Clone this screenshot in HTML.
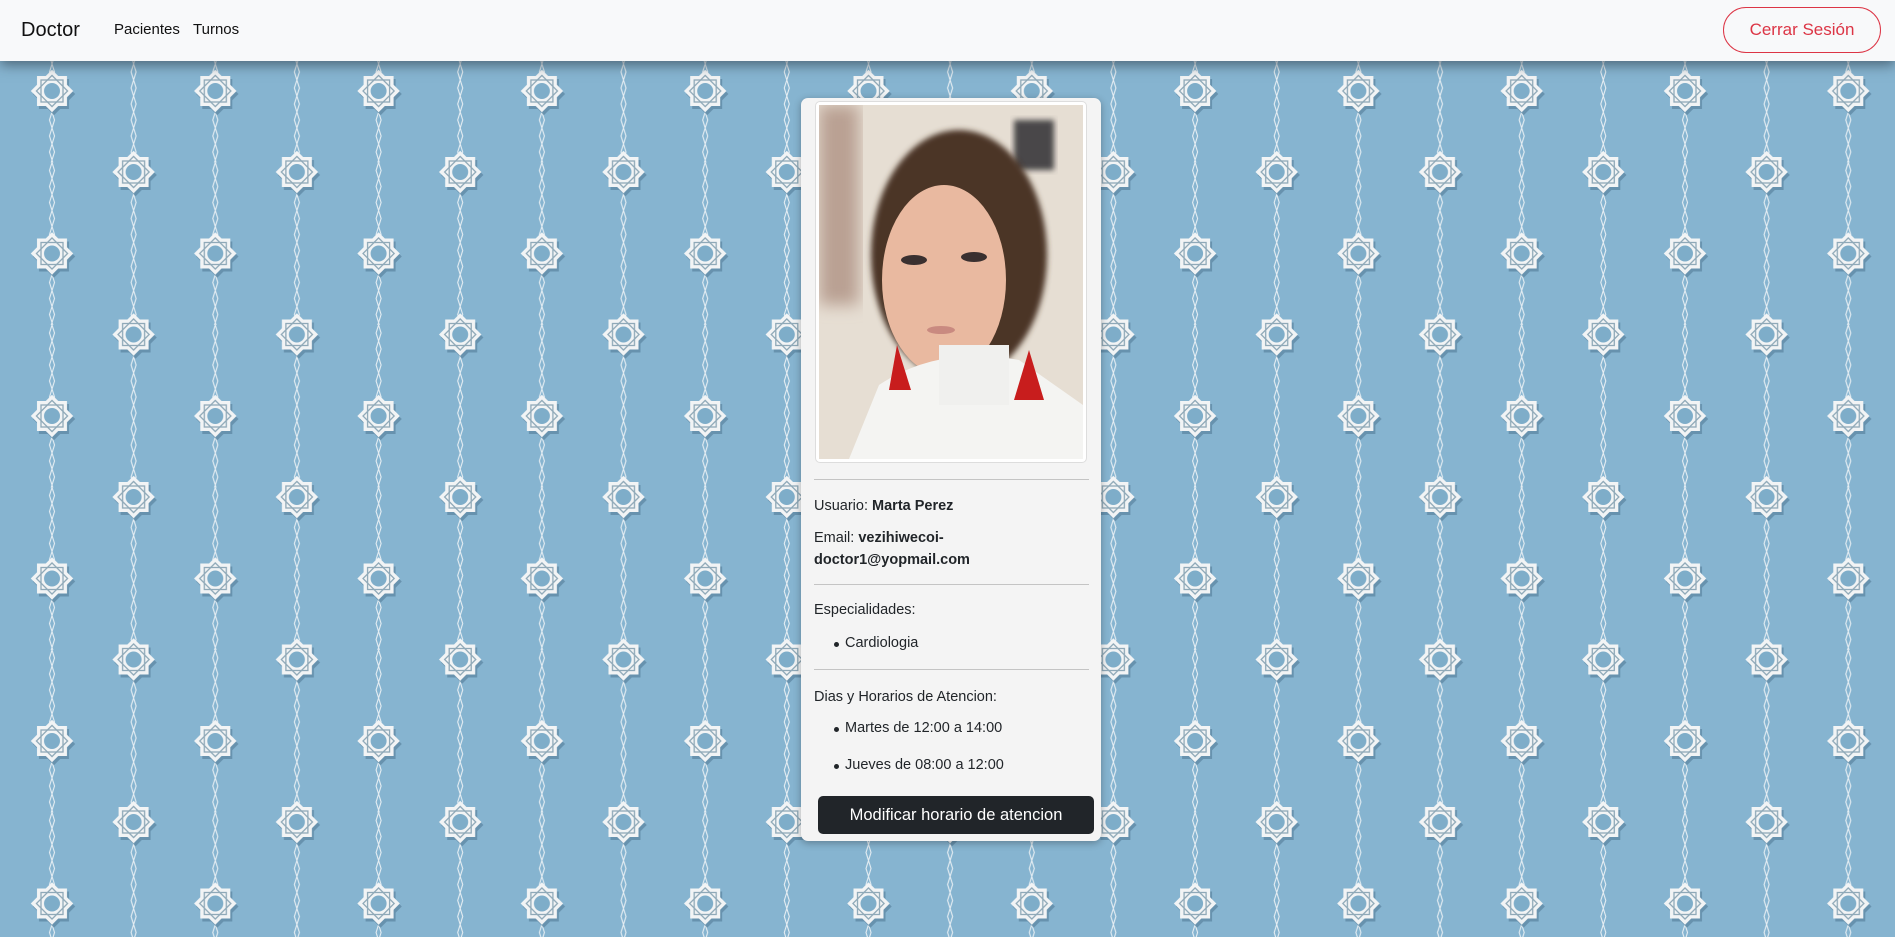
<!DOCTYPE html>
<html><head><meta charset="utf-8"><style>
*{box-sizing:border-box;margin:0;padding:0}
body{width:1895px;height:937px;overflow:hidden;font-family:"Liberation Sans",sans-serif;background:#86b4d0;position:relative}
#bg{position:absolute;left:0;top:0}
nav{position:absolute;left:0;top:0;width:1895px;height:61px;background:#f8f9fa;box-shadow:0 4px 12px rgba(30,40,50,.55);z-index:5}
.brand{position:absolute;left:21px;top:19px;font-size:20px;color:#111}
.nl{position:absolute;top:21px;font-size:15px;color:#111}
.btn{position:absolute;left:1723px;top:7px;width:158px;height:46px;border:1px solid #dc3545;border-radius:23px;color:#dc3545;font-size:17px;text-align:center;line-height:44px}
.card{position:absolute;left:801px;top:98px;width:300px;height:743px;background:#f4f4f4;border-radius:7px;box-shadow:0 2px 8px rgba(0,0,0,.3);font-size:14.5px;color:#212529}
.photo{position:absolute;left:14px;top:3px;width:272px;height:362px;background:#fff;border:1px solid #ddd;border-radius:5px;padding:3px}
hr{position:absolute;left:13px;width:275px;border:0;border-top:1px solid #c4c4c4}
.t{position:absolute;left:13px}
.li{position:absolute;left:44px}
.li:before{content:"";position:absolute;left:-11px;top:7px;width:5px;height:5px;border-radius:50%;background:#212529}
.mod{position:absolute;left:17px;top:698px;width:276px;height:38px;background:#212529;border-radius:5px;color:#fff;font-size:16.5px;text-align:center;line-height:38px}
</style></head><body>
<svg id="bg" width="1895" height="937">
<defs>
<g id="star">
<g transform="translate(2,3)" fill="#5f8aa5" opacity=".8"><rect x="-15" y="-15" width="30" height="30"/><rect x="-15" y="-15" width="30" height="30" transform="rotate(45)"/></g>
<g fill="#f2f4f5"><rect x="-15" y="-15" width="30" height="30"/><rect x="-15" y="-15" width="30" height="30" transform="rotate(45)"/></g>
<g fill="none" stroke="#8fa9b8" stroke-width="1.3"><rect x="-11" y="-11" width="22" height="22"/><rect x="-11" y="-11" width="22" height="22" transform="rotate(45)"/></g>
<circle r="8" fill="#7eadc9"/>
</g>
<path id="chain" fill="none" stroke="#e6eef3" stroke-width="1.1" d="M0 0 l2.5 8 -2.5 8 -2.5 -8 2.5 -8 m0 16 l2.5 8 -2.5 8 -2.5 -8 2.5 -8 m0 16 l2.5 8 -2.5 8 -2.5 -8 2.5 -8 m0 16 l2.5 8 -2.5 8 -2.5 -8 2.5 -8 m0 16 l2.5 8 -2.5 8 -2.5 -8 2.5 -8 m0 16 l2.5 8 -2.5 8 -2.5 -8 2.5 -8 m0 16 l2.5 8 -2.5 8 -2.5 -8 2.5 -8 m0 16 l2.5 8 -2.5 8 -2.5 -8 2.5 -8 m0 16 l2.5 8 -2.5 8 -2.5 -8 2.5 -8 m0 16 l2.5 8 -2.5 8 -2.5 -8 2.5 -8 m0 16 l2.5 8 -2.5 8 -2.5 -8 2.5 -8"/>
<pattern id="p" patternUnits="userSpaceOnUse" width="163.3" height="162.5">
<use href="#chain" x="52" y="0"/>
<use href="#chain" x="133.6" y="0"/>
<use href="#star" x="52" y="91"/>
<use href="#star" x="133.6" y="9.5"/>
<use href="#star" x="133.6" y="172"/>
<use href="#star" x="52" y="-71.5"/>
</pattern>
</defs>
<rect width="1895" height="937" fill="#86b4d0"/>
<rect width="1895" height="937" fill="url(#p)"/>
</svg>
<nav><div class="brand">Doctor</div><div class="nl" style="left:114px">Pacientes</div><div class="nl" style="left:193px">Turnos</div><div class="btn">Cerrar Sesión</div></nav>
<div class="card">
<div class="photo"><svg width="264" height="354" viewBox="0 0 264 354">
<defs><filter id="b"><feGaussianBlur stdDeviation="3"/></filter><filter id="b2"><feGaussianBlur stdDeviation="8"/></filter></defs>
<rect width="264" height="354" fill="#e6ded3"/>
<rect x="0" y="0" width="40" height="200" fill="#b9a093" filter="url(#b2)"/>
<rect x="195" y="15" width="40" height="50" fill="#4a4748" filter="url(#b)"/>
<ellipse cx="140" cy="150" rx="88" ry="125" fill="#4b3628" filter="url(#b)"/>
<ellipse cx="125" cy="175" rx="62" ry="95" fill="#e9b9a0"/>
<path d="M60 280 Q120 240 200 255 L264 300 L264 354 L30 354 Z" fill="#f4f4f2"/>
<rect x="120" y="240" width="70" height="60" fill="#f0f0ee"/>
<path d="M78 240 L70 285 L92 285 Z" fill="#c81d1d"/>
<path d="M210 245 L195 295 L225 295 Z" fill="#c81d1d"/>
<ellipse cx="95" cy="155" rx="13" ry="5" fill="#3a3030"/><ellipse cx="155" cy="152" rx="13" ry="5" fill="#3a3030"/>
<ellipse cx="122" cy="225" rx="14" ry="4" fill="#c98a80"/>
</svg></div>
<hr style="top:381px">
<div class="t" style="top:400px">Usuario: <b>Marta Perez</b></div>
<div class="t" style="top:429px;line-height:22px">Email: <b>vezihiwecoi-<br>doctor1@yopmail.com</b></div>
<hr style="top:486px">
<div class="t" style="top:504px">Especialidades:</div>
<div class="li" style="top:537px">Cardiologia</div>
<hr style="top:571px">
<div class="t" style="top:591px">Dias y Horarios de Atencion:</div>
<div class="li" style="top:622px">Martes de 12:00 a 14:00</div>
<div class="li" style="top:659px">Jueves de 08:00 a 12:00</div>
<div class="mod">Modificar horario de atencion</div>
</div>
</body></html>
